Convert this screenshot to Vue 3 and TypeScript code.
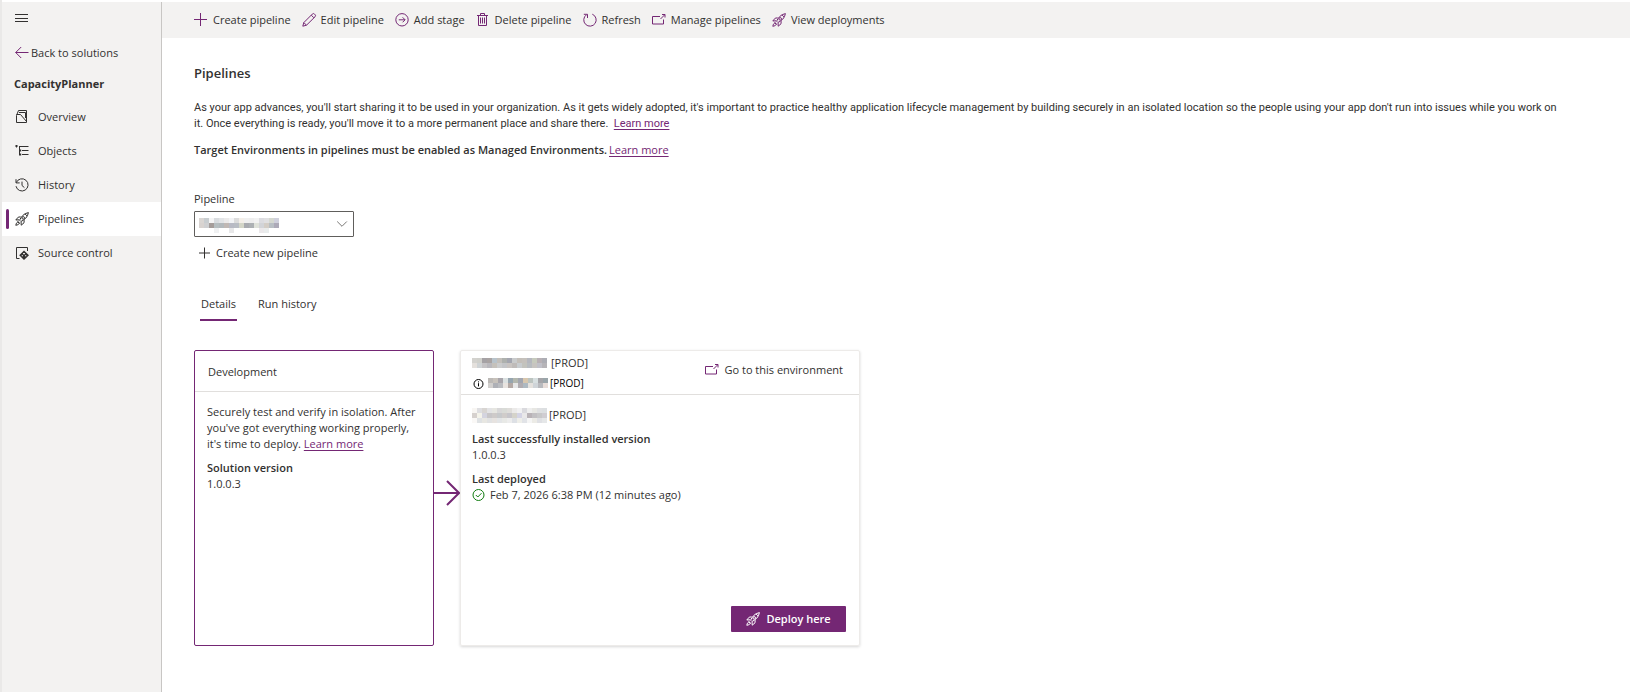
<script setup lang="ts">
import { defineComponent, h, ref } from 'vue'

type Shape = { d: string; fill?: boolean }

const icons: Record<string, Shape[]> = {
  menu: [{ d: 'M0 3.5H13M0 7.5H13M0 10.5H13' }],
  back: [{ d: 'M.7 6.5H13.5M6.2 1 .7 6.5 6.2 12' }],
  plus: [{ d: 'M6.5 0V13M0 6.5H13' }],
  plusSmall: [{ d: 'M7.5 1.5V12.5M2 7H13' }],
  edit: [{ d: 'M.8 13.2 1.8 9.6 10.3 1.1a1.5 1.5 0 0 1 2.2 0l.5.5a1.5 1.5 0 0 1 0 2.2L4.5 12.2ZM1.9 9.6 4.4 12.1M9.3 2.2 11.9 4.8' }],
  stage: [{ d: 'M7 .6a6.2 6.2 0 1 1 0 12.4A6.2 6.2 0 0 1 7 .6Z' }, { d: 'M3.8 6.8H10M7.6 4.3 10.1 6.8 7.6 9.3' }],
  trash: [{ d: 'M2.5 2.5V12.5H10.5V2.5M1 2.5H12M4.5 2.5V.5H8.5V2.5M4.5 4.5V10.5M6.5 4.5V10.5M8.5 4.5V10.5' }],
  refresh: [{ d: 'M9.3 1.2A6.2 6.2 0 1 1 3.5 1.8M.8 1.3H4.5V5' }],
  popOut: [{ d: 'M8 3.5H.5v7.5h11V6.5' }, { d: 'M8.5 6 12.7 1.8M10 1.5H13V4.5' }],
  rocket: [
    { d: 'M4.6 8.2C6 5 8.6 1.4 13.4.6 12.8 5.2 9.4 8 5.9 9.5Z' },
    { d: 'M5.6 4.8 3.2 5.2.8 8 4 7.8M9.2 8.2 9 10.8 6.2 13.2 6.1 10' },
    { d: 'M8.2 4.6a1.3 1.3 0 1 0 1.3 1.3A1.3 1.3 0 0 0 8.2 4.6M10 1.9 12.1 4' },
    { d: 'M3.6 9.2 1.4 11.2.8 13.3 2.9 12.7 5 10.6M2.6 9.6 4.4 11.4' },
  ],
  overview: [
    { d: 'M1.5 5.5V12.5H11.5V9M1.5 5.5 3.5.5H11.5V9' },
    { d: 'M1.5 4.5H5.5L11.5 11.5M4 2.5H10.5V8' },
  ],
  objects: [
    { d: 'M1.5 1V3.5M4 2.5H13.5M7 6.5H13.5M7 10.5H13.5M4.5 3V11' },
    { d: 'M4 5.5H6.2V7.5H4ZM4 9.5H6.2V11.5H4ZM.5 1H2.5V3H.5Z', fill: true },
  ],
  history: [{ d: 'M1.3 4.6A6.1 6.1 0 1 1 1 8.2M1 1.2V4.9H4.7M7 3.6V7.5L9.4 9.6' }],
  source: [
    { d: 'M4.5 12.5H1.5V1.5H12.5V5' },
    { d: 'M9 4.4 14 9.2 9 14 4.2 9.2ZM8.1 7.1V8.3H9.9V7.1ZM6.7 9.3H8V10.3H6.7ZM10 9.3H11.3V10.3H10Z', fill: true },
  ],
  chevron: [{ d: 'M2.2 4.5 7 9.3 11.8 4.5' }],
  info: [{ d: 'M6.5 3.5a4.5 4.5 0 1 1 0 9A4.5 4.5 0 0 1 6.5 3.5ZM6.5 7.2V10.4M6.5 5.4V6.4' }],
  check: [{ d: 'M6.5 1.5a5.5 5.5 0 1 1 0 11A5.5 5.5 0 0 1 6.5 1.5ZM3.8 7 5.8 9 9.5 5.2' }],
}

const AppIcon = defineComponent({
  props: { name: { type: String, required: true } },
  setup: (props) => () =>
    h(
      'svg',
      { viewBox: '0 0 14 14', width: 14, height: 14, class: 'icon', 'aria-hidden': 'true' },
      icons[props.name].map((s) =>
        h('path', {
          d: s.d,
          fill: s.fill ? 'currentColor' : 'none',
          'fill-rule': 'evenodd',
          stroke: s.fill ? 'none' : 'currentColor',
        }),
      ),
    ),
})

const MaskedText = defineComponent({
  props: { rows: { type: Array as () => string[], required: true } },
  setup: (props) => () => {
    const grid = props.rows.map((r) => r.split(' '))
    const w = grid[0].length * 5
    const ht = grid.length * 5
    return h(
      'svg',
      { viewBox: `0 0 ${w} ${ht}`, width: w, height: ht, class: 'icon', 'aria-hidden': 'true', 'shape-rendering': 'crispEdges' },
      grid.flatMap((r, y) => r.map((c, x) => h('rect', { x: x * 5, y: y * 5, width: 5, height: 5, fill: c === '-' ? 'none' : `#${c}` }))),
    )
  },
})

const maskPipeline = [
  'dad6d3 c8cdd0 f5f5f5 d9dcdf e2e4e6 ebeaea f2f3f5 dcdcdc f4efe9 f0f0f0 eeeeee f2f2f2 dcdce0 e0e0e2 d5d8d0 cfd0dc',
  'd8d3d0 cfd0d2 a59d9a b6bec0 b3b9bc c0b8b4 b8bac4 b9bdc4 d4d6c8 a9abb0 adb1b4 dfe2da d2d4d8 d3cdc6 b9bfc4 adaab8',
  '- - - f0f1f2 - - e8e8e9 - - - - - ebe8ea e9ecec - -',
]
const maskHeader = [
  'd3d2ce d0d0cb a5a2a5 a9a3a2 b8c3cb c3bfba aeb1ae a4a6b0 c9cbcc c4bfb9 c5c1bc b5b7be c6cabd b8b0b4 acadb4',
  'e4e0dc cfd3d5 c5c3c5 b9b8bd c5c1bb cbcccd c4c5c8 c9c4c1 bfbbb9 c8cccf c3c3bd b8bcc0 c7c4c0 c0c0c8 b6b4b8',
]
const maskOwner = [
  'bcb9b6 c7c2bb a8a5ab dbe1e1 96a5af b3b7ae a2a6b0 d8c7ae bcc4c0 d7dfe0 a5a4a8 9aa5aa',
  'd1cfcd aeb0b6 b9bbbf e8e3df b4a9a5 e5e6e7 b0acb0 aeb9c1 e4e1dd cfd4d8 b8b9bd e7dcd8',
]
const maskEnvironment = [
  'f8f6f3 dedee1 d8d5d2 e3e3e5 e6e6e1 d8d7d8 d9dbd7 dfddda ebeae9 f1f1f2 dadade eeeeee e7e7e3 dfe0e2 dcdfe1',
  'd6d1ce f4f3ea d4d4df c8c6c8 cecac9 c7c9cb d0ccca c7c6cb d5d3ca d4d4e5 e9e8e9 b9b3b7 c2c0c3 c8c8c9 d0cdd2',
  'faf8f6 dfe2e4 e8e7e2 e1e2e3 e7e3e0 e3e5e7 e8e9e6 ededed dde0e5 eeeee9 e1e3e7 f5f5f5 ecebe6 dfe0e4 e5e7e8',
]

const commands = [
  { icon: 'plus', label: 'Create pipeline' },
  { icon: 'edit', label: 'Edit pipeline' },
  { icon: 'stage', label: 'Add stage' },
  { icon: 'trash', label: 'Delete pipeline' },
  { icon: 'refresh', label: 'Refresh' },
  { icon: 'popOut', label: 'Manage pipelines' },
  { icon: 'rocket', label: 'View deployments' },
]
const navItems = [
  { icon: 'overview', label: 'Overview' },
  { icon: 'objects', label: 'Objects' },
  { icon: 'history', label: 'History' },
  { icon: 'rocket', label: 'Pipelines' },
  { icon: 'source', label: 'Source control' },
]
const activeNav = ref('Pipelines')
const tabs = ['Details', 'Run history']
const activeTab = ref('Details')
</script>

<template>
  <div class="shell">
    <aside class="sidebar">
      <button class="plain menu" type="button" aria-label="Toggle navigation"><AppIcon name="menu" /></button>
      <a class="back" href="#"><AppIcon name="back" class="accent" />Back to solutions</a>
      <h2 class="solution">CapacityPlanner</h2>
      <nav>
        <a
          v-for="n in navItems"
          :key="n.label"
          href="#"
          class="nav-item"
          :class="{ active: n.label === activeNav }"
          @click.prevent="activeNav = n.label"
        ><AppIcon :name="n.icon" />{{ n.label }}</a>
      </nav>
    </aside>

    <div class="page">
      <div class="toolbar" role="toolbar">
        <button v-for="c in commands" :key="c.label" class="plain command" type="button">
          <AppIcon :name="c.icon" class="accent" />{{ c.label }}
        </button>
      </div>

      <main class="content">
        <h1>Pipelines</h1>
        <p class="intro">
          As your app advances, you'll start sharing it to be used in your organization. As it gets widely adopted, it's
          important to practice healthy application lifecycle management by building securely in an isolated location so the
          people using your app don't run into issues while you work on it. Once everything is ready, you'll move it to a more
          permanent place and share there. &nbsp;<a class="link" href="#">Learn more</a>
        </p>
        <p class="notice">
          <strong>Target Environments in pipelines must be enabled as Managed Environments.</strong>
          <a class="link" href="#">Learn more</a>
        </p>

        <label class="field-label" for="pipeline">Pipeline</label>
        <div class="select-box">
          <select id="pipeline"><option></option></select>
          <MaskedText class="select-value" :rows="maskPipeline" />
          <AppIcon name="chevron" class="select-chevron" />
        </div>
        <button class="plain new-pipeline" type="button"><AppIcon name="plusSmall" />Create new pipeline</button>

        <div class="tabs" role="tablist">
          <button
            v-for="t in tabs"
            :key="t"
            type="button"
            role="tab"
            class="plain tab"
            :class="{ selected: t === activeTab }"
            :aria-selected="t === activeTab"
            @click="activeTab = t"
          >{{ t }}</button>
        </div>

        <div class="stages">
          <section class="card dev">
            <h3 class="dev-head">Development</h3>
            <div class="card-body">
              <p>
                Securely test and verify in isolation. After you've got everything working properly, it's time to deploy.
                <a class="link" href="#">Learn more</a>
              </p>
              <dl>
                <dt>Solution version</dt>
                <dd>1.0.0.3</dd>
              </dl>
            </div>
          </section>

          <svg class="arrow" viewBox="0 0 26 26" width="26" height="26" aria-hidden="true">
            <path d="M0 13H24M13 1 25 13 13 25" fill="none" stroke="currentColor" stroke-width="2" />
          </svg>

          <section class="card prod">
            <header class="prod-head">
              <div>
                <div class="masked-row stage-name"><MaskedText :rows="maskHeader" />[PROD]</div>
                <div class="masked-row owner"><AppIcon name="info" /><MaskedText :rows="maskOwner" />[PROD]</div>
              </div>
              <button class="plain go" type="button"><AppIcon name="popOut" class="accent" />Go to this environment</button>
            </header>
            <div class="card-body">
              <div class="masked-row"><MaskedText :rows="maskEnvironment" />[PROD]</div>
              <dl>
                <dt>Last successfully installed version</dt>
                <dd>1.0.0.3</dd>
                <dt>Last deployed</dt>
                <dd class="deployed"><AppIcon name="check" class="ok" />Feb 7, 2026 6:38 PM (12 minutes ago)</dd>
              </dl>
            </div>
            <button class="deploy" type="button"><AppIcon name="rocket" />Deploy here</button>
          </section>
        </div>
      </main>
    </div>
  </div>
</template>

<style>
body {
  margin: 0;
  background: #fff;
}
.icon {
  flex: none;
  overflow: visible;
}
</style>

<style scoped>
.shell {
  box-sizing: border-box;
  display: flex;
  min-height: 100vh;
  padding-top: 2px;
  border-left: 2px solid #eae9e8;
  font: 11px/16px 'Open Sans', 'Noto Sans', sans-serif;
  color: #323130;
}
h1, h2, h3, p, dl, dd {
  margin: 0;
}
.plain {
  display: flex;
  align-items: center;
  padding: 0;
  border: 0;
  background: none;
  color: inherit;
  font: inherit;
  cursor: pointer;
}
.accent,
.arrow {
  color: #742774;
}
.link {
  color: #742774;
  text-decoration: underline;
  text-underline-offset: 2px;
}

.sidebar {
  flex: none;
  width: 159px;
  border-right: 1px solid #c8c6c4;
  background: #f3f2f1;
}
.menu {
  height: 32px;
  padding-left: 13px;
}
.back {
  display: flex;
  align-items: center;
  gap: 2px;
  height: 38px;
  padding-left: 13px;
  color: inherit;
  text-decoration: none;
}
.solution {
  padding: 4px 0 8px 12px;
  font-size: 11px;
  line-height: 16px;
  font-weight: 700;
}
.nav-item {
  display: flex;
  align-items: center;
  gap: 9px;
  height: 34px;
  padding-left: 13px;
  color: inherit;
  text-decoration: none;
}
.nav-item.active {
  padding-left: 4px;
  background: #fff;
}
.nav-item.active::before {
  content: '';
  width: 3px;
  height: 20px;
  margin-right: -3px;
  border-radius: 2px;
  background: #742774;
}

.page {
  flex: 1;
  min-width: 0;
}
.toolbar {
  display: flex;
  gap: 11px;
  height: 36px;
  padding-left: 32px;
  background: #f3f2f1;
}
.command {
  gap: 5px;
}
.content {
  padding: 25px 32px 40px;
}
h1 {
  font-size: 13px;
  line-height: 20px;
  font-weight: 600;
}
.intro {
  margin: 17px 36px 0 0;
  font-family: Roboto, 'Open Sans', sans-serif;
}
.notice {
  margin-top: 10px;
}
.notice strong {
  margin-right: 2px;
  font-weight: 600;
}
.field-label {
  display: block;
  margin-top: 33px;
  font-weight: 500;
}
.select-box {
  position: relative;
  width: 160px;
  height: 26px;
  margin-top: 4px;
}
select {
  appearance: none;
  width: 100%;
  height: 100%;
  border: 1px solid #605e5c;
  border-radius: 1px;
  background: #fff;
}
.select-value,
.select-chevron {
  position: absolute;
  top: 7px;
  left: 5px;
  pointer-events: none;
}
.select-chevron {
  top: 6px;
  left: auto;
  right: 5px;
  color: #797775;
}
.new-pipeline {
  gap: 5px;
  margin: 8px 0 0 3px;
}

.tabs {
  display: flex;
  gap: 20px;
  margin: 35px 0 29px 6px;
}
.tab {
  padding: 0 1px 7px;
  border-bottom: 2px solid transparent;
}
.tab.selected {
  border-color: #742774;
  font-weight: 500;
}

.stages {
  display: flex;
  align-items: stretch;
}
.card {
  box-sizing: border-box;
  min-height: 296px;
  border-radius: 2px;
}
.dev {
  width: 240px;
  border: 1px solid #742774;
}
.prod {
  display: flex;
  flex-direction: column;
  width: 400px;
  border: 1px solid #edebe9;
  box-shadow: 0 1px 3px rgba(0, 0, 0, 0.16);
}
.arrow {
  flex: none;
  margin-top: 130px;
}
.dev-head {
  padding: 12px 13px 11px;
  border-bottom: 1px solid #e1dfdd;
  font-size: 11px;
  line-height: 17px;
  font-weight: 500;
}
.card-body {
  padding: 12px 11px;
}
.dev .card-body {
  padding: 12px;
}
dt {
  margin-top: 8px;
  font-weight: 600;
}
.prod-head {
  display: flex;
  justify-content: space-between;
  align-items: flex-start;
  padding: 4px 16px 3px 11px;
  border-bottom: 1px solid #e1dfdd;
}
.masked-row {
  display: flex;
  align-items: center;
  gap: 2px;
}
.stage-name {
  gap: 4px;
  font-weight: 500;
}
.owner {
  margin-top: 4px;
  font-size: 10px;
  color: #000;
}
.go {
  gap: 6px;
  margin-top: 7px;
}
.deployed {
  display: flex;
  align-items: center;
  gap: 4px;
}
.ok {
  color: #107c10;
}
.deploy {
  display: flex;
  align-items: center;
  justify-content: center;
  gap: 6px;
  align-self: flex-end;
  width: 115px;
  height: 26px;
  margin: auto 13px 13px 0;
  padding: 0;
  border: 0;
  border-radius: 1px;
  background: #742774;
  color: #fff;
  font: 600 11px/16px 'Open Sans', 'Noto Sans', sans-serif;
  cursor: pointer;
}
</style>
